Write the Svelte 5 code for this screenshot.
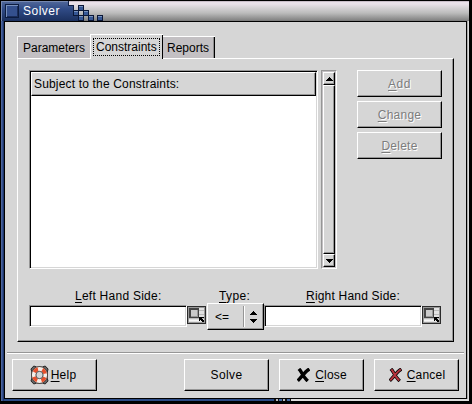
<script>
  const actions = [
    ['A', 'dd', 0.5],
    ['C', 'hange', 0.25],
    ['D', 'elete', 0.25]
  ];
</script>

{#snippet picker()}
  <svg class="picker" width="19" height="18" viewBox="0 0 19 18" shape-rendering="crispEdges">
    <rect width="19" height="18" fill="#2c2c2c" />
    <rect x="1" y="1" width="17" height="16" fill="#999" />
    <rect x="2" y="2" width="15" height="14" fill="#e2e2e2" />
    <path d="M2 4.5H17M2 8.5H17M2 12.5H17" stroke="#bbb" />
    <path d="M2 14.5H12" stroke="#f6f6f6" />
    <rect x="2" y="2" width="10" height="10" fill="#444" />
    <rect x="4" y="4" width="7" height="7" fill="#999" />
    <rect x="4" y="4" width="6" height="6" fill="#cacaca" />
    <path d="M12 11h5v1h-2v1h1v1h1v2h-2v-1h-1v-1h-1v1h-1z" fill="#000" />
  </svg>
{/snippet}

{#snippet cross(color)}
  <svg class="cross" width="13" height="14" viewBox="0 0 13 14">
    <path d="M3 2.2C4.5 4 6.5 9 9.5 11.8M11 2C8 4 4.5 9 1.9 11.6" fill="none" stroke="#000" stroke-width="3.4" stroke-linecap="square" />
    <path d="M3 2.2C4.5 4 6.5 9 9.5 11.8M11 2C8 4 4.5 9 1.9 11.6" fill="none" stroke={color} stroke-width="2" stroke-linecap="square" />
  </svg>
{/snippet}

<div class="window">
  <header>
    <svg class="caption" width="110" height="21" viewBox="0 0 110 21" shape-rendering="crispEdges">
      <defs>
        <linearGradient id="blue" x2="0" y2="1">
          <stop offset="0" stop-color="#52699b" />
          <stop offset=".4" stop-color="#304b86" />
          <stop offset="1" stop-color="#1c315f" />
        </linearGradient>
      </defs>
      <path d="M1 1H68V5H73V15H78V21H1z" fill="url(#blue)" />
      <path d="M1.5 21V1.5H68" fill="none" stroke="#7688b0" />
      <path d="M68.5 1V5.5H73.5V10" fill="none" stroke="#102044" />
      <rect x="5" y="4" width="14" height="14" fill="#0c1c40" />
      <rect x="6" y="5" width="12" height="12" fill="#7890bd" />
      <rect x="7" y="6" width="11" height="11" fill="#34508e" />
      <path d="M7 16.5H17.5V6" stroke="#1b2d5b" fill="none" />
      {#each [[78, 5], [73, 10], [83, 10], [78, 15], [88, 15], [97, 15]] as [x, y]}
        <rect {x} {y} width="6" height="6" fill="#0a1737" />
        <rect x={x + 1} y={y + 1} width="4" height="4" fill="#365795" />
        <path d="M{x + 1} {y + 1.5}h4" stroke="#7892be" />
      {/each}
    </svg>
    <span class="title">Solver</span>
  </header>

  <main>
    <nav>
      <div class="tab t1"><span>Parameters</span></div>
      <div class="tab active"><span>Constraints</span></div>
      <div class="tab t3"><span>Reports</span></div>
    </nav>
    <section class="page">
      <div class="upper">
        <div class="list">
          <div class="column raised"><span>Subject to the Constraints:</span></div>
        </div>
        <div class="scroll">
          <div class="arrow"><svg width="7" height="4" viewBox="0 0 7 4" shape-rendering="crispEdges"><path d="M3 0h1v1h1v1h1v1h1v1H0V3h1V2h1V1h1z" /></svg></div>
          <div class="thumb"></div>
          <div class="arrow"><svg width="7" height="4" viewBox="0 0 7 4" shape-rendering="crispEdges"><path d="M0 0h7v1H6v1H5v1H4v1H3V3H2V2H1V1H0z" /></svg></div>
        </div>
        <div class="actions">
          {#each actions as [key, rest, gap]}
            <button class="raised" disabled><span style:letter-spacing="{gap}px"><u>{key}</u>{rest}</span></button>
          {/each}
        </div>
      </div>
      <div class="labels">
        <span class="l1"><u>L</u>eft Hand Side:</span>
        <span class="l2"><u>T</u>ype:</span>
        <span class="l3"><u>R</u>ight Hand Side:</span>
      </div>
      <div class="fields">
        <div class="entry"></div>
        {@render picker()}
        <div class="option raised">
          <span>&lt;=</span>
          <i></i>
          <svg width="7" height="12" viewBox="0 0 7 12" shape-rendering="crispEdges"><path d="M3 0h1v1h1v1h1v1h1v1H0V3h1V2h1V1h1zM0 8h7v1H6v1H5v1H4v1H3v-1H2v-1H1V9H0z" /></svg>
        </div>
        <div class="entry"></div>
        {@render picker()}
      </div>
    </section>
    <hr />
    <footer>
      <button class="raised help">
        <svg width="19" height="20" viewBox="0 0 20 20" preserveAspectRatio="none">
          <path d="M1 4L4 1L7 2L13 2L16 1L19 4L18 8V13L19 16L16 19L13 18H7L4 19L1 16L2 13V7z" fill="#666" stroke="#222" />
          <circle cx="10" cy="10" r="6" fill="none" stroke="#443a36" stroke-width="5.6" />
          <circle cx="10" cy="10" r="6" fill="none" stroke="#f5eee8" stroke-width="4" />
          <circle cx="10" cy="10" r="6" fill="none" stroke="#e6502c" stroke-width="4" stroke-dasharray="4.712 4.712" stroke-dashoffset="-2.356" />
          <circle cx="10" cy="10" r="3.7" fill="#d6d6d6" stroke="#555" stroke-width=".9" />
        </svg>
        <span><u>H</u>elp</span>
      </button>
      <button class="raised solve"><span>Solve</span></button>
      <button class="raised close">{@render cross('#000')}<span><u>C</u>lose</span></button>
      <button class="raised cancel">{@render cross('#b8343e')}<span><u>C</u>ancel</span></button>
    </footer>
  </main>
</div>

<style>
  :global(body) { margin: 0; background: #000; }
  * { box-sizing: border-box; }
  .window {
    width: 472px; height: 404px; overflow: hidden;
    display: flex; flex-direction: column;
    padding: 0 3px 3px 1px;
    font: 12px/14px "Liberation Sans", Arial, sans-serif;
    color: #000;
    background:
      linear-gradient(#000, #000) 0 0 / 1px 100% no-repeat,
      linear-gradient(#000, #000) 100% 0 / 3px 100% no-repeat,
      linear-gradient(#000, #000) 0 100% / 100% 3px no-repeat,
      linear-gradient(90deg, #4d659c 0 1px, #34508e 1px 2px, #20366b 2px) 1px 0 / 3px 401px no-repeat,
      linear-gradient(90deg, #2a4a84 0 273px, #111 273px 275px, #bbb 275px 277px, #111 277px 278px, #456ba5 278px 281px, #111 281px 282px, #bbb 282px 284px, #111 284px 286px, #456ba5 286px 289px, #111 289px 290px, #ddd 290px) 1px 399px / 468px 2px no-repeat,
      linear-gradient(90deg, #aaa 0 1px, #ddd 1px) 467px 0 / 2px 401px no-repeat,
      #000;
  }
  header {
    height: 21px; display: flex; position: relative;
    background: linear-gradient(#000 0 1px, #c9bec9 1px 2px, #e9e1e9 2px 4px, #d9d5d9 7px, #bcbcbc 13px, #858585 20px, #777 21px);
  }
  .caption { margin-left: -1px; }
  .title { position: absolute; left: 22px; top: 4px; color: #fff; letter-spacing: .5px; }
  main {
    flex: none; width: 463px; height: 378px; margin-left: 3px;
    border: 1px solid #000; background: #d6d6d6; padding: 12px 0 0;
  }
  nav { display: flex; align-items: flex-end; height: 24px; padding-left: 12px; }
  .tab {
    height: 22px; background: #c3c0c3;
    border: solid #fff; border-width: 1px 0 0 1px;
    padding: 4px 0 0 5px; white-space: nowrap;
  }
  .t1 { width: 73px; }
  .tab.active {
    width: 73px; height: 25px; margin-bottom: -1px; z-index: 1;
    background: #d6d6d6; box-shadow: inset -1px 0 #000; padding: 3px 0 0 2px;
  }
  .active span { display: block; width: 67px; height: 18px; border: 1px dotted #000; padding: 1px 0 0 2px; }
  .t3 { width: 52px; border-left: 0; padding-left: 4px; box-shadow: inset -1px 0 #000, inset -2px 0 #8e8e8e; }
  .page {
    width: 437px; height: 284px; margin-left: 12px;
    border: 1px solid; border-color: #fff #000 #000 #fff;
    box-shadow: inset -1px -1px #969696; padding: 11px 0 0 11px;
  }
  .raised {
    background: #d6d6d6; border: 1px solid; border-color: #fff #000 #000 #fff;
    box-shadow: inset -1px -1px #969696;
  }
  .upper { display: flex; height: 199px; }
  .list {
    width: 289px; height: 199px; background: #fff;
    border: 1px solid; border-color: #969696 #fff #fff #969696;
    box-shadow: inset 1px 1px #000, inset -1px -1px #d6d6d6; padding: 1px;
  }
  .column { height: 24px; padding: 4px 0 0 2px; letter-spacing: .17px; white-space: nowrap; }
  .scroll {
    width: 16px; height: 199px; margin-left: 3px; padding: 1px;
    border: 1px solid; border-color: #969696 #fff #fff #969696; background: #c3c0c3;
    display: flex; flex-direction: column;
  }
  .arrow, .thumb { background: #d6d6d6; border: 1px solid; border-color: #fff #000 #000 #fff; box-shadow: inset -1px -1px #969696; }
  .arrow { height: 13px; display: flex; align-items: center; justify-content: center; flex: none; }
  .thumb { flex: 1; }
  .actions { display: flex; flex-direction: column; gap: 4px; margin-left: 20px; }
  button { font: inherit; color: #000; margin: 0; padding: 0; width: 85px; height: 32px; display: flex; align-items: center; justify-content: center; border-radius: 0; }
  .actions button { height: 27px; color: #7d7d7d; text-shadow: 1px 1px #fff; }
  u { text-decoration-thickness: 1px; text-underline-offset: 2px; }
  .labels { height: 36px; display: flex; padding-top: 20px; white-space: nowrap; }
  .l1 { width: 144px; padding-left: 46px; letter-spacing: .25px; }
  .l2 { width: 133px; padding-left: 46px; letter-spacing: .35px; }
  .l3 { letter-spacing: .2px; }
  .fields { display: flex; align-items: flex-start; }
  .entry {
    width: 158px; height: 22px; background: #fff; border: 1px solid; border-color: #969696 #fff #fff #969696;
    box-shadow: inset 1px 1px #000, inset -1px -1px #d6d6d6;
  }
  .picker { margin-top: 1px; flex: none; }
  .option { width: 57px; height: 27px; margin: -2px 0 0 1px; display: flex; align-items: center; padding-left: 7px; }
  .option span { width: 28px; }
  .option i { width: 2px; height: 21px; background: linear-gradient(90deg, #969696 50%, #fff 50%); margin-right: 5px; }
  hr { border: solid; border-width: 1px 0; border-color: #969696 transparent #fff; margin: 10px 2px 5px; height: 2px; }
  footer { display: flex; padding-left: 7px; }
  .help { margin-right: 87px; padding-right: 3px; letter-spacing: .25px; }
  .help svg { margin-right: 2px; }
  .solve { margin-right: 10px; letter-spacing: .4px; }
  .close { margin-right: 10px; letter-spacing: .2px; }
  .close, .cancel { padding-left: 1px; }
  .cancel { letter-spacing: .2px; }
  .cross { margin-right: 5px; }
</style>
